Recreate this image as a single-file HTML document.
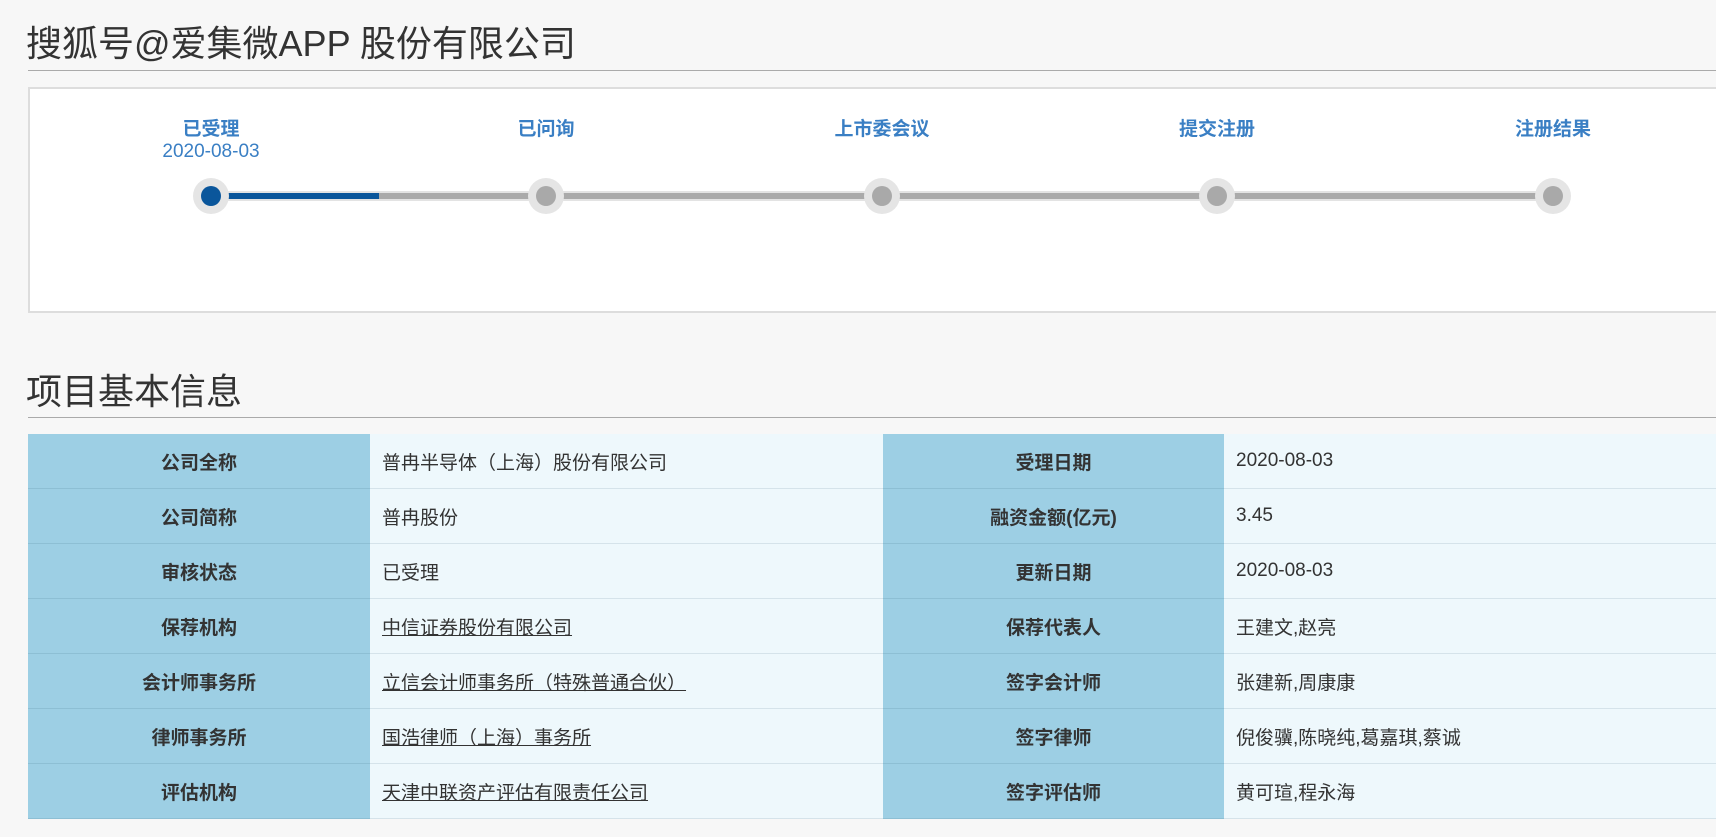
<!DOCTYPE html>
<html><head><meta charset="utf-8"><style>
body{margin:0;width:1716px;height:837px;background:#f7f7f7;font-family:"Liberation Sans","Noto Sans CJK SC",sans-serif;overflow:hidden;position:relative}
.t{position:absolute;color:#333;font-size:36px;white-space:nowrap}
.hl{position:absolute;left:28px;right:0;height:1px;background:#aaa}
.box{position:absolute;left:28px;top:87px;width:1700px;height:222px;background:#fff;border:2px solid #ddd}
.lbl{position:absolute;color:#3a7fc4;font-size:19px;font-weight:bold;transform:translateX(-50%);white-space:nowrap}
.dt{position:absolute;color:#3a7fc4;font-size:19px;transform:translateX(-50%)}
.c{position:absolute;width:36px;height:36px;border-radius:50%;background:#e5e5e5;top:178px}
.c i{position:absolute;left:8px;top:8px;width:20px;height:20px;border-radius:50%;background:#a9a9a9}
table{position:absolute;left:28px;top:434px;border-collapse:collapse;font-size:19px;color:#333}
td{height:54px;border-bottom:1px solid #d5e3ea;padding:0}
td.h{background:#9dcfe4;font-weight:bold;text-align:center;border-bottom-color:#8dbfd4}
td.v{background:#eef8fc;padding-left:12px}
u{text-decoration:underline}
</style></head><body>
<div class="t" style="left:26px;top:15px">搜狐号@爱集微APP 股份有限公司</div>
<div class="hl" style="top:70px"></div>
<div class="box"></div>
<div style="position:absolute;left:211px;top:191px;width:1342px;height:10px;background:#e3e3e3"></div>
<div style="position:absolute;left:211px;top:193px;width:1342px;height:6px;background:#aaa"></div>
<div style="position:absolute;left:211px;top:193px;width:168px;height:6px;background:#0a569b"></div>
<div class="c" style="left:193px"><i style="background:#0a569b"></i></div>
<div class="c" style="left:528px"><i></i></div>
<div class="c" style="left:864px"><i></i></div>
<div class="c" style="left:1199px"><i></i></div>
<div class="c" style="left:1535px"><i></i></div>
<div class="lbl" style="left:211px;top:114px">已受理</div>
<div class="dt" style="left:211px;top:141px">2020-08-03</div>
<div class="lbl" style="left:546px;top:114px">已问询</div>
<div class="lbl" style="left:882px;top:114px">上市委会议</div>
<div class="lbl" style="left:1217px;top:114px">提交注册</div>
<div class="lbl" style="left:1553px;top:114px">注册结果</div>
<div class="t" style="left:26px;top:363px">项目基本信息</div>
<div class="hl" style="top:417px"></div>
<table>
<colgroup><col style="width:342px"><col style="width:513px"><col style="width:341px"><col style="width:492px"></colgroup>
<tr><td class="h">公司全称</td><td class="v">普冉半导体（上海）股份有限公司</td><td class="h">受理日期</td><td class="v">2020-08-03</td></tr>
<tr><td class="h">公司简称</td><td class="v">普冉股份</td><td class="h">融资金额(亿元)</td><td class="v">3.45</td></tr>
<tr><td class="h">审核状态</td><td class="v">已受理</td><td class="h">更新日期</td><td class="v">2020-08-03</td></tr>
<tr><td class="h">保荐机构</td><td class="v"><u>中信证券股份有限公司</u></td><td class="h">保荐代表人</td><td class="v">王建文,赵亮</td></tr>
<tr><td class="h">会计师事务所</td><td class="v"><u>立信会计师事务所（特殊普通合伙）</u></td><td class="h">签字会计师</td><td class="v">张建新,周康康</td></tr>
<tr><td class="h">律师事务所</td><td class="v"><u>国浩律师（上海）事务所</u></td><td class="h">签字律师</td><td class="v">倪俊骥,陈晓纯,葛嘉琪,蔡诚</td></tr>
<tr><td class="h">评估机构</td><td class="v"><u>天津中联资产评估有限责任公司</u></td><td class="h">签字评估师</td><td class="v">黄可瑄,程永海</td></tr>
</table>
</body></html>
